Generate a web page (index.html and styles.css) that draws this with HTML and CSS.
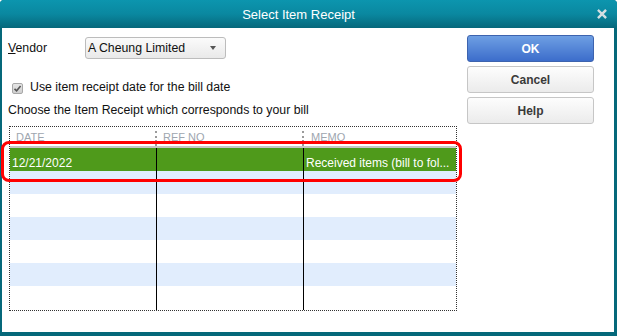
FILE: index.html
```html
<!DOCTYPE html>
<html>
<head>
<meta charset="utf-8">
<title>Select Item Receipt</title>
<link rel="stylesheet" href="styles.css">
</head>
<body>
<div class="dialog">
  <div class="titlebar">
    <span class="title">Select Item Receipt</span>
    <svg class="close" width="10" height="10" viewBox="0 0 10 10"><path d="M1.8 1.8 L8.2 8.2 M8.2 1.8 L1.8 8.2" stroke="#d3dfe2" stroke-width="2.4" stroke-linecap="square"/></svg>
  </div>
  <div class="content">
    <div class="main">
      <div class="vendor-row">
        <span class="vendor-label label"><u>V</u>endor</span>
        <div class="combo"><span class="label">A Cheung Limited</span><span class="arrow"></span></div>
      </div>
      <div class="check-row">
        <span class="checkbox"><svg width="9" height="9" viewBox="0 0 9 9"><path d="M1.5 4.8 L3.6 6.8 L7.6 2" fill="none" stroke="#555" stroke-width="1.6"/></svg></span>
        <span class="label">Use item receipt date for the bill date</span>
      </div>
      <div class="choose label">Choose the Item Receipt which corresponds to your bill</div>
      <div class="grid">
        <div class="head">
          <div class="hcell sep"><span class="hlabel">DATE</span></div>
          <div class="hcell sep"><span class="hlabel">REF NO</span></div>
          <div class="hcell memo"><span class="hlabel">MEMO</span></div>
        </div>
        <div class="row sel"><div class="cell">12/21/2022</div><div class="cell"></div><div class="cell last">Received items (bill to fol...</div></div>
        <div class="row alt"><div class="cell"></div><div class="cell"></div><div class="cell last"></div></div>
        <div class="row"><div class="cell"></div><div class="cell"></div><div class="cell last"></div></div>
        <div class="row alt"><div class="cell"></div><div class="cell"></div><div class="cell last"></div></div>
        <div class="row"><div class="cell"></div><div class="cell"></div><div class="cell last"></div></div>
        <div class="row alt"><div class="cell"></div><div class="cell"></div><div class="cell last"></div></div>
        <div class="row end"><div class="cell"></div><div class="cell"></div><div class="cell last"></div></div>
      </div>
    </div>
    <div class="buttons">
      <button class="btn primary">OK</button>
      <button class="btn">Cancel</button>
      <button class="btn">Help</button>
    </div>
    <div class="highlight"></div>
  </div>
</div>
</body>
</html>
```
FILE: styles.css
```css
html, body {
  margin: 0;
  padding: 0;
}
body {
  width: 617px;
  height: 336px;
  overflow: hidden;
  font-family: "Liberation Sans", Arial, sans-serif;
  font-size: 12px;
  color: #111;
}
.label {
  font-size: 12.3px;
}
.dialog {
  width: 617px;
  height: 336px;
  background: #05687a;
  display: flex;
  flex-direction: column;
  border-radius: 4px 4px 0 0;
  overflow: hidden;
}
.titlebar {
  height: 28px;
  flex: none;
  display: flex;
  align-items: center;
  background: linear-gradient(#0c95ae, #0a88a0 50%, #06687b);
}
.title {
  flex: 1;
  text-align: center;
  color: #fff;
  font-size: 13px;
  padding-top: 1px;
}
.close {
  margin-right: 10px;
  flex: none;
}
.content {
  position: relative;
  flex: 1;
  background: #fff;
  margin: 0 3px 4px 2px;
  display: flex;
}
.main {
  width: 465px;
  flex: none;
  box-sizing: border-box;
  padding: 9px 0 0 6px;
}
.vendor-row {
  display: flex;
  align-items: center;
  height: 22px;
}
.vendor-label {
  width: 77px;
  flex: none;
}
.combo {
  width: 141px;
  height: 22px;
  box-sizing: border-box;
  border: 1px solid #bcbcbc;
  border-radius: 3px;
  background: linear-gradient(#fbfbfb, #e9e9e9);
  display: flex;
  align-items: center;
  justify-content: space-between;
  padding: 0 9px 0 2px;
}
.arrow {
  width: 0;
  height: 0;
  border-left: 3.5px solid transparent;
  border-right: 3.5px solid transparent;
  border-top: 4px solid #555;
}
.check-row {
  margin-top: 19px;
  height: 18px;
  display: flex;
  align-items: center;
}
.checkbox {
  width: 11px;
  height: 11px;
  margin: 2px 7px 0 4px;
  box-sizing: border-box;
  border: 1px solid #a8a8a8;
  border-radius: 2px;
  background: linear-gradient(#e6e6e6, #cfcfcf);
  display: flex;
  align-items: center;
  justify-content: center;
}
.choose {
  margin-top: 5px;
  height: 18px;
  line-height: 18px;
}
.grid {
  margin: 7px 0 0 1px;
  width: 448px;
  box-sizing: border-box;
  border: 1px dotted #333;
}
.head {
  height: 19px;
  display: grid;
  grid-template-columns: 147px 147px 1fr;
  border-bottom: 2px solid #c6c6c6;
}
.hcell {
  margin-top: 4px;
  height: 15px;
  box-sizing: border-box;
  padding-left: 6px;
}
.hcell.sep {
  border-right: 2px dotted #9a9a9a;
}
.hcell.memo {
  padding-left: 7px;
}
.hlabel {
  display: block;
  height: 10px;
  overflow: hidden;
  font-size: 11px;
  line-height: 12px;
  color: #9ea6af;
}
.row {
  display: grid;
  grid-template-columns: 147px 147px 1fr;
  height: 23px;
}
.row.end {
  height: 24px;
}
.row.alt {
  background: #e1edfd;
}
.row.sel {
  background: #4f9a1b;
}
.cell {
  border-right: 1px solid #000;
  box-sizing: border-box;
  padding: 7px 0 0 2px;
  line-height: 16px;
  color: #fff;
  white-space: nowrap;
  overflow: hidden;
}
.cell.last {
  border-right: none;
}
.buttons {
  margin-top: 7px;
  width: 127px;
  display: flex;
  flex-direction: column;
  gap: 4px;
}
.btn {
  height: 27px;
  box-sizing: border-box;
  border: 1px solid #c6c6c6;
  border-radius: 3px;
  background: linear-gradient(#fdfdfd, #ebebeb);
  color: #3a3a3a;
  font-family: "Liberation Sans", Arial, sans-serif;
  font-size: 12px;
  font-weight: bold;
  padding: 0;
}
.btn.primary {
  border-color: #3d63ae;
  background: linear-gradient(#6e9fe3, #3c6dcb);
  color: #fff;
}
.highlight {
  position: absolute;
  left: -1px;
  top: 113px;
  width: 461px;
  height: 41px;
  box-sizing: border-box;
  border: 3px solid #ff0000;
  border-radius: 8px;
}
```
